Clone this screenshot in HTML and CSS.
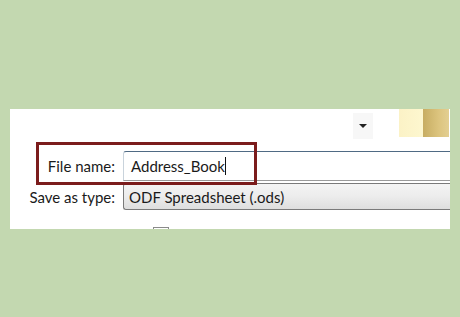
FILE: index.html
```html
<!DOCTYPE html>
<html>
<head>
<meta charset="utf-8">
<link rel="stylesheet" href="styles.css">
</head>
<body>
<div class="dialog">
  <div class="toprow">
    <span class="dropdown"><span class="arrow"></span></span>
    <span class="thumb"><span class="thumb-light"></span><span class="thumb-gold"></span></span>
  </div>
  <div class="row">
    <label class="label">File name:</label>
    <div class="field name-field">Address_Book<span class="caret"></span></div>
  </div>
  <div class="row row-type">
    <label class="label">Save as type:</label>
    <div class="field type-field">ODF Spreadsheet (.ods)</div>
  </div>
  <div class="row row-check">
    <span class="checkbox"></span>
    <span class="check-text">Automatic file name extension</span>
  </div>
  <div class="highlight"></div>
</div>
</body>
</html>
```
FILE: styles.css
```css
html, body {
  margin: 0;
  padding: 0;
}
body {
  background: #c3d8b0;
  width: 460px;
  height: 317px;
  padding: 109px 10px 0;
  box-sizing: border-box;
  font-family: Lato, "Open Sans", sans-serif;
  color: #1a1a1a;
}
.dialog {
  position: relative;
  width: 440px;
  height: 120px;
  background: #ffffff;
  overflow: hidden;
  display: flex;
  flex-direction: column;
}
.toprow {
  height: 42px;
  display: flex;
  justify-content: flex-end;
  align-items: flex-start;
  flex: none;
}
.dropdown {
  width: 20px;
  height: 26px;
  margin-top: 4px;
  margin-right: 26px;
  background: #f7f7f7;
  display: flex;
  align-items: center;
  justify-content: center;
}
.arrow {
  width: 0;
  height: 0;
  border-left: 4px solid transparent;
  border-right: 4px solid transparent;
  border-top: 4px solid #222;
}
.thumb {
  display: flex;
  height: 28px;
  width: 50px;
  margin-right: 1px;
}
.thumb-light {
  width: 24px;
  background: linear-gradient(90deg, #fbf2c6, #fdf7cf);
}
.thumb-gold {
  width: 26px;
  background: linear-gradient(90deg, #c7ad62, #dcc47e 60%, #e3cf92);
}
.row {
  display: flex;
  align-items: center;
  flex: none;
  height: 30px;
}
.label {
  width: 105px;
  text-align: right;
  font-size: 15px;
  flex: none;
  margin-right: 8px;
}
.field {
  flex: 1;
  font-size: 15px;
  box-sizing: border-box;
  white-space: nowrap;
}
.name-field {
  height: 30px;
  border-top: 1px solid #4f6a84;
  border-left: 1px solid #c9d3dc;
  border-bottom: 1px solid #9a9a9a;
  border-radius: 3px 0 0 0;
  padding-left: 7px;
  display: flex;
  align-items: center;
}
.caret {
  display: inline-block;
  width: 1px;
  height: 18px;
  background: #111;
  margin-left: 0;
}
.row-type {
  margin-top: 2px;
  height: 27px;
}
.type-field {
  height: 27px;
  border: 1px solid #7a7a7a;
  border-right: none;
  border-radius: 3px 0 0 3px;
  background: linear-gradient(#f4f4f4, #ececec 50%, #dedede);
  padding-left: 5px;
  display: flex;
  align-items: center;
}
.row-check {
  margin-top: 17px;
  height: 20px;
  align-items: flex-start;
  padding-left: 143px;
}
.checkbox {
  width: 14px;
  height: 14px;
  border: 1px solid #8a8a8a;
  flex: none;
}
.check-text {
  font-size: 15px;
  margin-left: 8px;
  margin-top: -2px;
  line-height: 20px;
}
.highlight {
  position: absolute;
  left: 26px;
  top: 33px;
  width: 221px;
  height: 43px;
  border: 3px solid #7b1c1c;
  box-sizing: border-box;
}
```
